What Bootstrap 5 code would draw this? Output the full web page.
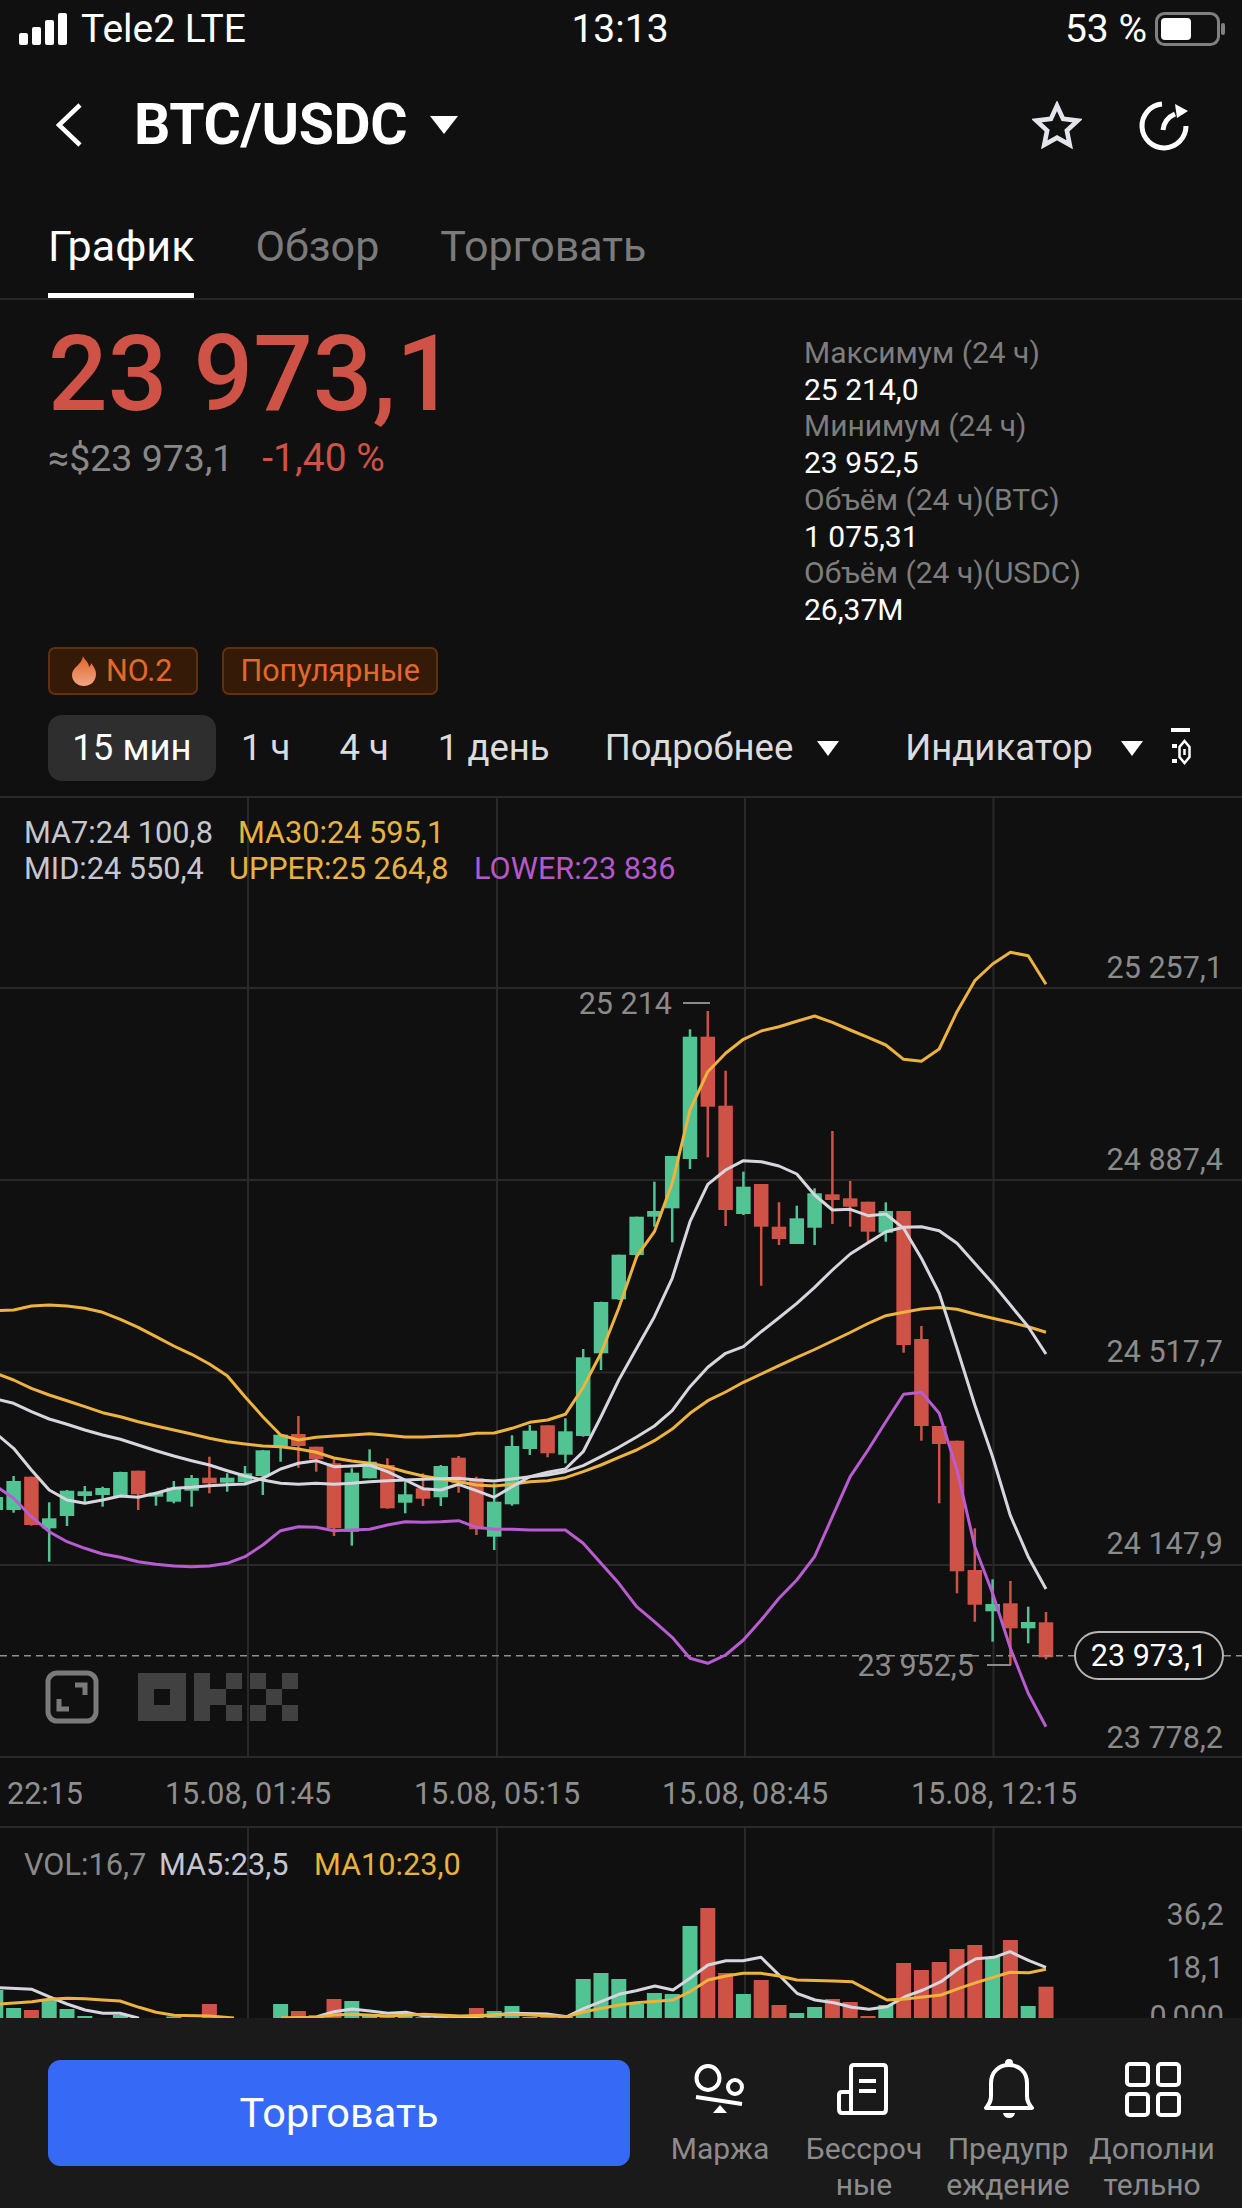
<!doctype html>
<html lang="ru">
<head>
<meta charset="utf-8">
<meta name="viewport" content="width=device-width, initial-scale=1">
<title>BTC/USDC</title>
<link href="https://cdn.jsdelivr.net/npm/bootstrap@5.3.0/dist/css/bootstrap.min.css" rel="stylesheet">
<style>
  body { background: #101011; font-family: Roboto, "Noto Sans", sans-serif; color: #fff; }
  .page { width: 1242px; height: 2208px; overflow: hidden; }

  .status-row { height: 58px; padding: 0 15px 0 19px; font-size: 39px; line-height: 58px; }
  .status-row > div { width: 400px; }
  .status-row > .status-right { width: 406px; }
  .signal { margin-right: 12px; }

  .title-row { height: 134px; padding: 0 52px 0 56px; }
  .pair-name { font-size: 57px; font-weight: 700; margin-left: 52px; margin-right: 23px; letter-spacing: -.3px; }
  .title-icons { gap: 56px; }

  .tab-row { height: 108px; border-bottom: 2px solid #272727; padding-left: 48px; gap: 61px; }
  .tab-row .nav-link { padding: 29px 0 0; height: 106px; font-size: 43px; line-height: 50px; color: #7b7b7b; border-bottom: 5px solid transparent; }
  .tab-row .nav-link.active { color: #fff; border-bottom-color: #fff; }

  .price-block { height: 347px; padding-left: 48px; }
  .price-big { font-size: 105px; font-weight: 500; line-height: 110px; color: #ce5246; margin-top: 20px; }
  .price-sub { font-size: 37.5px; line-height: 56px; color: #888; }
  .price-sub .chg { color: #ce5246; font-size: 39px; margin-left: 29px; }
  .stat-col { width: 438px; padding-top: 35px; font-size: 30px; line-height: 36.7px; }
  .stat-col .lbl { color: #7d7d7d; }

  .tag-row { height: 48px; padding-left: 48px; gap: 24px; }
  .tag-item { height: 48px; border: 2px solid #61300f; border-radius: 7px; background: #351a08; color: #e2682c; font-size: 30.5px; line-height: 44px; padding: 0 16px; }
  .tag-item svg { margin: 0 10px 0 6px; }
  .tag-item span { margin-right: 8px; }

  .period-row { height: 103px; padding: 21px 0 16px 48px; border-bottom: 2px solid #2a2a2a; font-size: 36.5px; color: #dcdcdc; }
  .period-row > * { flex: none; }
  .period-on { background: #2e2e2e; color: #fff; height: 66px; width: 168px; border-radius: 14px; text-align: center; line-height: 66px; margin-right: 25px; }
  .period-gap { margin-right: 49px; }
  .more-gap { margin-right: 55px; }
  .ind-gap { margin-left: 66px; margin-right: 28px; }
  .tri-gap { margin-right: 28px; }

  .chart-area { height: 1220px; display: block; }
  .chart-area text { font-family: Roboto, "Noto Sans", sans-serif; }
  .ax { font-size: 30.5px; fill: #8a8a8a; text-anchor: end; }
  .leg { font-size: 30.7px; }
  .tm { font-size: 30.5px; fill: #8f8f8f; text-anchor: middle; }

  .action-bar { height: 190px; background: #1a1a1a; position: relative; padding: 42px 18px 0 48px; }
  .trade-btn { width: 582px; height: 106px; margin-right: 18px; border-radius: 12px; font-size: 41.5px; background: #3669f5; border-color: #3669f5; color: #fff; }
  .act-item { width: 144px; margin-top: -2px; text-align: center; color: #8c8c8c; font-size: 30px; line-height: 35.5px; }
  .act-item svg { display: block; margin-bottom: 9px; }
</style>
</head>
<body>
<div class="page d-flex flex-column">

  <div class="status-row d-flex justify-content-between align-items-center">
    <div class="d-flex align-items-center">
      <svg class="signal" width="50" height="32" viewBox="0 0 50 32" fill="#fff">
        <rect x="0" y="20" width="9" height="12" rx="2"/><rect x="13" y="14" width="9" height="18" rx="2"/>
        <rect x="26" y="7" width="9" height="25" rx="2"/><rect x="39" y="0" width="9" height="32" rx="2"/>
      </svg>
      <span>Tele2 LTE</span>
    </div>
    <div class="text-center">13:13</div>
    <div class="status-right d-flex align-items-center justify-content-end">
      <span class="me-2">53 %</span>
      <svg width="72" height="34" viewBox="0 0 72 34">
        <rect x="1.5" y="1.5" width="62" height="31" rx="8" fill="none" stroke="#808080" stroke-width="3"/>
        <rect x="6" y="6" width="30" height="22" rx="4" fill="#fff"/>
        <rect x="66" y="11" width="4" height="12" rx="2" fill="#808080"/>
      </svg>
    </div>
  </div>

  <div class="title-row d-flex align-items-center">
    <svg width="26" height="44" viewBox="0 0 26 44" fill="none" stroke="#fff" stroke-width="4.5"><path d="M24 2 3 22l21 20"/></svg>
    <span class="pair-name">BTC/USDC</span>
    <svg width="28" height="18" viewBox="0 0 28 18" fill="#fff"><path d="M0 0h28L14 18z"/></svg>
    <div class="title-icons ms-auto d-flex align-items-center">
      <svg width="50" height="48" viewBox="0 0 54 52" fill="none" stroke="#e4e4ec" stroke-width="5"><path d="M27 5l6.600 14.400 15.700 1.900-11.600 10.700 3.100 15.500L27 39.800l-13.800 7.700 3.100-15.500L4.700 21.300l15.700-1.900z"/></svg>
      <svg width="52" height="52" viewBox="0 0 52 52" fill="none" stroke="#fff" stroke-width="5"><path d="M48 27A22 22 0 1 1 24 5"/><path d="M25 31c1-8 5-13 12-16"/><path d="M37 5l13 7-11 7z" fill="#fff" stroke="none"/></svg>
    </div>
  </div>

  <nav class="tab-row nav">
    <a class="nav-link active" href="#">График</a>
    <a class="nav-link" href="#">Обзор</a>
    <a class="nav-link" href="#">Торговать</a>
  </nav>

  <div class="price-block d-flex justify-content-between">
    <div>
      <div class="price-big">23 973,1</div>
      <div class="price-sub">≈$23 973,1<span class="chg">-1,40 %</span></div>
    </div>
    <div class="stat-col">
      <div class="lbl">Максимум (24 ч)</div><div>25 214,0</div>
      <div class="lbl">Минимум (24 ч)</div><div>23 952,5</div>
      <div class="lbl">Объём (24 ч)(BTC)</div><div>1 075,31</div>
      <div class="lbl">Объём (24 ч)(USDC)</div><div>26,37M</div>
    </div>
  </div>

  <div class="tag-row d-flex">
    <div class="tag-item d-flex align-items-center">
      <svg width="24" height="30" viewBox="0 0 24 30"><defs><linearGradient id="flame" x1="0" y1="0" x2="0" y2="1"><stop offset="0" stop-color="#e0652a"/><stop offset="1" stop-color="#f0a583"/></linearGradient></defs><path fill="url(#flame)" d="M11 0c2 5 6 6 6 11 1-1 2-2 2-4 3 4 5 7 5 11 0 7-5 12-12 12S0 25 0 19C0 11 10 9 11 0z"/></svg>
      <span>NO.2</span>
    </div>
    <div class="tag-item">Популярные</div>
  </div>

  <div class="period-row d-flex align-items-center">
    <span class="period-on">15 мин</span>
    <span class="period-gap">1 ч</span>
    <span class="period-gap">4 ч</span>
    <span class="more-gap">1 день</span>
    <span>Подробнее</span>
    <svg class="ms-4" width="22" height="15" viewBox="0 0 22 15" fill="#fff"><path d="M0 0h22L11 15z"/></svg>
    <span class="ind-gap">Индикатор</span>
    <svg class="tri-gap" width="22" height="15" viewBox="0 0 22 15" fill="#fff"><path d="M0 0h22L11 15z"/></svg>
    <svg width="20" height="40" viewBox="0 0 20 40" fill="none" stroke="#fff"><path d="M0 2h19" stroke-width="4"/><path d="M1 18h5M1 33h5" stroke-width="4"/><path d="M13.500 13l5 6v10l-5 6-5-6V19z" stroke-width="2.500"/><path d="M13.500 21v6" stroke-width="2.500"/></svg>
  </div>

  <svg id="chart" class="chart-area" width="1242" height="1220" viewBox="0 798 1242 1220">
    <g id="grid" stroke="#292929" stroke-width="2"></g>
    <g id="volBars"></g>
    <g id="candles"></g>
    <line x1="0" y1="1655.700" x2="1242" y2="1655.700" stroke="#8f8f8f" stroke-width="1.500" stroke-dasharray="7 5"/>
    <g id="lines" fill="none" stroke-width="3" stroke-linejoin="round"></g>

    <text class="leg" x="24" y="843" fill="#c6c6d0">MA7:24 100,8</text>
    <text class="leg" x="238" y="843" fill="#e8b23e">MA30:24 595,1</text>
    <text class="leg" x="24" y="879" fill="#c6c6d0">MID:24 550,4</text>
    <text class="leg" x="229" y="879" fill="#e8b23e">UPPER:25 264,8</text>
    <text class="leg" x="474" y="879" fill="#b657cc">LOWER:23 836</text>

    <text class="ax" x="1223" y="978">25 257,1</text>
    <text class="ax" x="1223" y="1170">24 887,4</text>
    <text class="ax" x="1223" y="1362">24 517,7</text>
    <text class="ax" x="1223" y="1554">24 147,9</text>
    <text class="ax" x="1223" y="1748">23 778,2</text>

    <text class="ax" x="672" y="1014">25 214</text>
    <line x1="683" y1="1003" x2="710" y2="1003" stroke="#8a8a8a" stroke-width="2"/>
    <text class="ax" x="974" y="1676">23 952,5</text>
    <line x1="987" y1="1665" x2="1011" y2="1665" stroke="#8a8a8a" stroke-width="2"/>

    <rect x="1075" y="1632" width="148" height="47" rx="23.500" fill="#101011" stroke="#b5b5b5" stroke-width="2"/>
    <text x="1149" y="1666" font-size="30.5" fill="#fff" text-anchor="middle">23 973,1</text>

    <rect x="48" y="1673" width="48" height="48" rx="9" fill="none" stroke="#7a7a7a" stroke-width="5"/>
    <path d="M75 1685h10v10M69 1709H59v-10" fill="none" stroke="#7a7a7a" stroke-width="5"/>

    <g fill="#414141">
      <path fill-rule="evenodd" d="M138 1673h48v48h-48zM154 1689v16h16v-16z"/>
      <path d="M194 1673h16v48h-16zM210 1689h16v16h-16zM226 1673h16v16h-16zM226 1705h16v16h-16z"/>
      <path d="M250 1673h16v16h-16zM282 1673h16v16h-16zM266 1689h16v16h-16zM250 1705h16v16h-16zM282 1705h16v16h-16z"/>
    </g>

    <text class="tm" x="45" y="1804">22:15</text>
    <text class="tm" x="248" y="1804">15.08, 01:45</text>
    <text class="tm" x="497" y="1804">15.08, 05:15</text>
    <text class="tm" x="745" y="1804">15.08, 08:45</text>
    <text class="tm" x="994" y="1804">15.08, 12:15</text>

    <text class="leg" x="24" y="1875" fill="#8a8a8a">VOL:16,7</text>
    <text class="leg" x="159" y="1875" fill="#c6c6d0">MA5:23,5</text>
    <text class="leg" x="314" y="1875" fill="#e8b23e">MA10:23,0</text>
    <text class="ax" x="1224" y="1925">36,2</text>
    <text class="ax" x="1224" y="1978">18,1</text>
    <text class="ax" x="1224" y="2027">0,000</text>
  </svg>

  <div class="action-bar d-flex align-items-start">
    <button type="button" class="trade-btn btn btn-primary">Торговать</button>
    <div class="act-item">
      <svg width="144" height="64" viewBox="648 2058 144 64" fill="none" stroke="#fff" stroke-width="4">
        <ellipse cx="708" cy="2078" rx="11.500" ry="12"/><circle cx="735" cy="2087" r="7"/>
        <path d="M696 2097l46 7"/><path d="M713 2113l7-8 7 8z" fill="#fff" stroke="none"/>
      </svg>
      Маржа
    </div>
    <div class="act-item">
      <svg width="144" height="64" viewBox="792 2058 144 64" fill="none" stroke="#fff" stroke-width="4">
        <path d="M851 2112v-44q0-3 3-3h29q3 0 3 3v41q0 4-3 4h-41q-3 0-3-4v-14q0-3 3-3h8"/>
        <path d="M859 2081h17M859 2091h17"/>
      </svg>
      Бессроч<br>ные
    </div>
    <div class="act-item">
      <svg width="144" height="64" viewBox="936 2058 144 64" fill="none" stroke="#fff" stroke-width="4">
        <path d="M986 2108c3-4 5-6 5-12v-13c0-11 8-18 18-18s18 7 18 18v13c0 6 2 8 5 12z" stroke-linejoin="round"/>
        <circle cx="1009" cy="2063" r="4" fill="#fff" stroke="none"/>
        <path d="M1003 2113h12q-1 5-6 5t-6-5z" fill="#fff" stroke="none"/>
      </svg>
      Предупр<br>еждение
    </div>
    <div class="act-item">
      <svg width="144" height="64" viewBox="1080 2058 144 64" fill="none" stroke="#fff" stroke-width="4">
        <rect x="1127" y="2064" width="21" height="21" rx="3"/><rect x="1158" y="2064" width="21" height="21" rx="3"/>
        <rect x="1127" y="2094" width="21" height="21" rx="3"/><rect x="1158" y="2094" width="21" height="21" rx="3"/>
      </svg>
      Дополни<br>тельно
    </div>
  </div>
</div>

<script src="https://cdn.jsdelivr.net/npm/bootstrap@5.3.0/dist/js/bootstrap.bundle.min.js"></script>
<script>
  const GREEN = '#52c393', RED = '#cf5246';
  const xAt = i => 1046 - 17.8 * (59 - i);   // i = 0 is the leftmost candle, 59 the latest
  const svgEl = (parent, name, attrs) => {
    const el = document.createElementNS('http://www.w3.org/2000/svg', name);
    for (const k in attrs) el.setAttribute(k, attrs[k]);
    parent.appendChild(el);
    return el;
  };

  // colour, wick top, body top, body bottom, wick bottom
  const candles = [
    ['g',1497,1497,1510,1510],['g',1476,1481,1510,1512.7],['r',1476.7,1476.7,1525,1525.7],['g',1502.3,1518.3,1528.3,1561.7],
    ['g',1490,1490.7,1516,1526],['g',1486,1491.3,1496,1503.3],['g',1486.7,1488,1495,1506.7],['g',1471.7,1472,1496,1496.7],
    ['r',1470.7,1470.7,1494.3,1510],['g',1491.7,1492.7,1496.7,1505.7],['g',1481,1487.7,1501.7,1503.3],['g',1475,1478,1490.7,1506.7],
    ['r',1456.7,1477.7,1483.3,1493.3],['g',1473.3,1477.7,1482.7,1491.7],['g',1466,1473.3,1482,1482.7],['g',1450,1450.3,1476,1495],
    ['g',1434.3,1434.7,1446.7,1461.7],['r',1416,1434,1446,1467.7],['r',1446.7,1446.7,1459.3,1471.7],['r',1459.3,1463.3,1528.3,1536],
    ['g',1468.3,1472.7,1531.7,1545.7],['g',1449.3,1461.7,1478.3,1478.3],['r',1458.3,1465,1508.3,1508.7],['g',1481.7,1494.3,1502.7,1513.3],
    ['r',1473.3,1488.3,1498.7,1506],['g',1465,1466,1497.3,1506],['r',1456,1457.7,1483.3,1492.7],['r',1476.7,1478.3,1529.3,1535],
    ['g',1483.3,1501.7,1536.7,1550],['g',1435.3,1446,1504.3,1505.7],['g',1425,1430.7,1449,1455],['r',1425.3,1425.3,1453.3,1457.3],
    ['g',1418.3,1431.3,1454.7,1463.3],['g',1349,1357.3,1436,1436.7],['g',1301.7,1302,1353.3,1370],['g',1254.7,1254.7,1299.3,1300],
    ['g',1216.7,1216.7,1255,1258.3],['g',1181.7,1211,1216.7,1226.7],['g',1156,1156,1208.3,1242.3],['g',1029.3,1036.7,1159,1169],
    ['r',1011,1036.7,1106.7,1157.3],['r',1070.7,1105.7,1210,1226],['g',1171.7,1186.7,1214,1215],['r',1184,1184,1226.7,1285.7],
    ['r',1202.3,1226.7,1239,1245],['g',1205.7,1218.3,1244,1244],['g',1188.3,1193.3,1227.7,1245],['r',1131,1194.3,1200,1224],
    ['r',1181,1198.3,1206.7,1226.7],['r',1201.7,1201.7,1231.7,1243.3],['g',1202.3,1211,1232.7,1241.7],['r',1211,1211,1345,1352.7],
    ['r',1326,1339,1426,1440.7],['r',1426,1426,1444,1503.3],['r',1440.7,1440.7,1571.3,1593.3],['r',1528.3,1570,1604.7,1621.7],
    ['g',1579.3,1604,1611.3,1641.7],['r',1581,1603.3,1628.3,1665],['g',1606.7,1622,1628.3,1643.3],['r',1612,1622.3,1657.3,1659.3]
  ];

  const upper = [1310.7,1310,1306,1305,1306,1308.3,1312.3,1319.3,1327.3,1336.7,1346,1354.3,1364,1375.7,1396.7,1416.7,1435,1440,1437.3,1436,1435,1433.7,1435.3,1437,1437,1436.3,1435.7,1433.3,1433,1428.3,1422.3,1420,1414.3,1387.3,1353.3,1308,1256.7,1231.7,1183.3,1110,1071.7,1053.3,1039.3,1031,1026.7,1021.3,1016,1022.3,1030,1037.3,1045,1059.3,1061.3,1049,1011.7,980.7,964,952.3,955.7,984.3];
  const ma30 = [1373.3,1380,1388.3,1395,1400.7,1406.7,1412.7,1416.7,1421.7,1426,1430,1434,1438.3,1441.7,1444,1446,1446.7,1449,1452.3,1458,1461,1463.3,1466.7,1471.7,1476,1479,1481.7,1485,1486,1484.3,1481.7,1480.7,1477.7,1471.7,1465,1457.3,1450,1440.7,1429,1413.3,1400.7,1392,1382.3,1374,1365.7,1357.3,1349.5,1341,1332.5,1323.5,1315.7,1312.3,1309,1307.5,1309.3,1314,1318.3,1322.3,1326.7,1332.3];
  const mid = [1399,1403.3,1411.7,1419,1424.3,1430,1435,1439.3,1445,1450.7,1456,1460.7,1465,1470.7,1476,1480,1483.3,1484.3,1483.3,1484.3,1483.3,1481.7,1480.7,1480,1479.3,1478.7,1478.3,1480,1481,1479,1476.7,1475,1471.7,1465.7,1456.7,1447.3,1437,1426,1410.7,1386.7,1367.3,1353.3,1346.7,1331.7,1317.7,1303.3,1287.3,1270,1254,1242.7,1231.7,1227.3,1226.7,1230.7,1243.3,1263.3,1283.3,1305,1326.7,1354];
  const ma7 = [1433.3,1448.3,1470,1490,1500,1503.3,1500,1496,1497.3,1493.3,1488.3,1487.3,1485.7,1484.7,1484,1478.3,1469,1463.3,1460.7,1466.7,1466,1465,1471.7,1480,1488.7,1490,1484.3,1490.7,1497.3,1486.7,1476.7,1472.3,1469,1451.7,1416.7,1380,1348.3,1316.7,1278.3,1221.7,1184.3,1170,1160.7,1161.7,1166,1174,1195,1210,1209.3,1215.7,1214,1228.3,1258.3,1293.3,1348.3,1405,1456.7,1515.7,1556.7,1589];
  const lower = [1486,1498.3,1516.7,1531.7,1541.7,1548.3,1554,1557.3,1561.7,1564.3,1566,1566.7,1566,1563.3,1556.7,1545,1530.7,1526.7,1527.3,1530.7,1530,1529.3,1525,1521.7,1522.3,1521.7,1520.7,1527.3,1529.3,1529.3,1530,1530,1530,1543.3,1563.3,1583.3,1606.7,1621.7,1637.3,1658.3,1663.3,1655,1640,1620,1598.3,1580,1556.7,1516.7,1476.7,1450,1421.7,1394.3,1392.3,1413.3,1470,1546.7,1593.3,1648.3,1693.3,1726.7];

  // volume bar heights above the 2018 baseline; colour comes from the candle
  const volume = [28,10,8,19,9,2,0,3,0,0,1.5,0,14,0,0,0,14,7,3,19,17,3,2,2,1,3,1,10,7,12,1,1,1,39,45,39,14,25,24,92,110,45,24,38,13,5,11,19,16,2,13,55,48,56,69,73,61,78,12,31.3];

  // volume MA lines, read off as [x, y] in page pixels
  const volWhite = [[0,1987.7],[32,1989.3],[49,1996.7],[67,2004],[85,2010],[103,2013.3],[120,2013.3],[139,2018.3]];
  const volWhite2 = [[317,2016.7],[334,2011.7],[352,2009],[370,2011],[388,2013.3],[406,2012.3],[424,2016],[475,2016.7],[513,2013.3],[547,2014],[567,2016.7],[584,2008.3],[601,2001.7],[619,1994.3],[636,1990.7],[655,1986],[673,1990],[690,1978.3],[708,1965],[726,1960.7],[743,1960.7],[761,1957.3],[779,1975],[797,1993.3],[815,2000],[834,2002.7],[852,2007.3],[869,2009.3],[887,2006.7],[905,1996.7],[923,1990],[941,1981.7],[959,1968.3],[976,1958.7],[994,1957.3],[1010,1951.7],[1029,1960.7],[1046,1967.3]];
  const volYellow = [[0,2004],[32,2001.7],[49,1999.3],[67,1998.3],[85,1998.7],[103,2000],[120,2001],[139,2007.3],[156,2012.3],[174,2015.3],[209,2016],[234,2018]];
  const volYellow2 = [[281,2017.7],[317,2017.3],[334,2015],[352,2014.3],[388,2016],[424,2014.3],[460,2016],[513,2014.3],[567,2016.7],[584,2011.7],[619,2005],[636,2002.7],[673,2000],[690,1991.7],[708,1980],[726,1976],[743,1973.3],[761,1973.3],[779,1976],[797,1980],[834,1981],[852,1981.7],[887,2000],[905,1999],[941,1995],[959,1988.3],[976,1982.7],[1010,1972.3],[1029,1972.7],[1046,1969.3]];

  const grid = document.getElementById('grid');
  [988, 1180, 1372.6, 1565, 1757, 1827].forEach(y => svgEl(grid, 'line', { x1: 0, x2: 1242, y1: y, y2: y }));
  [248, 497, 745, 993.5].forEach(x => {
    svgEl(grid, 'line', { x1: x, x2: x, y1: 798, y2: 1757 });
    svgEl(grid, 'line', { x1: x, x2: x, y1: 1827, y2: 2018 });
  });

  const volBars = document.getElementById('volBars');
  const candleGroup = document.getElementById('candles');
  candles.forEach((c, i) => {
    const x = xAt(i), col = c[0] === 'g' ? GREEN : RED;
    svgEl(candleGroup, 'rect', { x: x - 1.25, y: c[1], width: 2.5, height: c[4] - c[1], fill: col });
    svgEl(candleGroup, 'rect', { x: x - 7.25, y: c[2], width: 14.5, height: Math.max(c[3] - c[2], 2), fill: col });
    if (volume[i] > 0) svgEl(volBars, 'rect', { x: x - 7.5, y: 2018 - volume[i], width: 15, height: volume[i], fill: col });
  });

  const lines = document.getElementById('lines');
  const drawLine = (pts, stroke) => svgEl(lines, 'polyline', { points: pts.map(p => p.join(',')).join(' '), stroke });
  const byCandle = ys => ys.map((y, i) => [xAt(i).toFixed(1), y]);
  drawLine(byCandle(lower), '#b95bd1');
  drawLine(byCandle(upper), '#eeb23e');
  drawLine(byCandle(ma30), '#eeb23e');
  drawLine(byCandle(mid), '#d6d6df');
  drawLine(byCandle(ma7), '#d6d6df');
  drawLine(volWhite, '#d6d6df');
  drawLine(volWhite2, '#d6d6df');
  drawLine(volYellow, '#eeb23e');
  drawLine(volYellow2, '#eeb23e');
</script>
</body>
</html>
